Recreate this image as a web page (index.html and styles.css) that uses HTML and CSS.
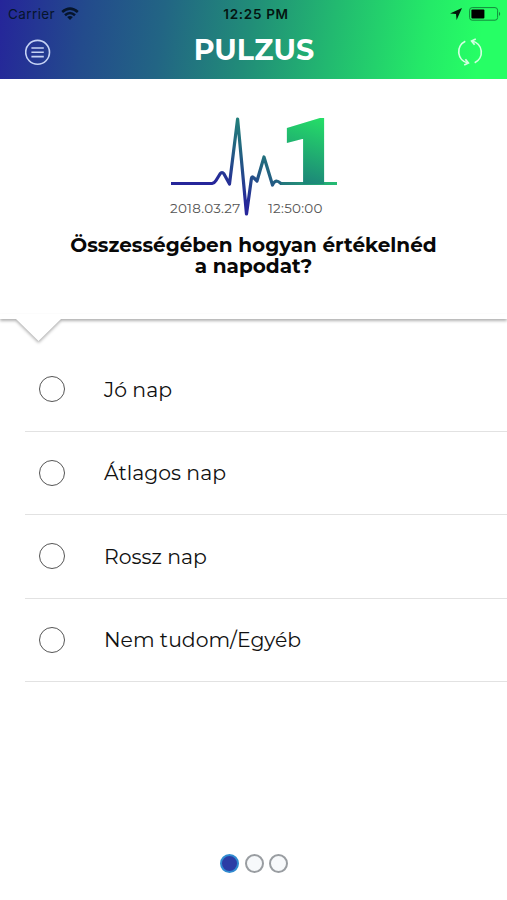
FILE: index.html
```html
<!DOCTYPE html>
<html lang="hu">
<head>
<meta charset="utf-8">
<title>Pulzus</title>
<link rel="stylesheet" href="styles.css">
</head>
<body>
<header class="header">
  <div class="status">
    <div class="carrier"><span class="carrier-name">Carrier</span>
      <svg width="18" height="14" viewBox="0 0 18 14" fill="none" stroke="#06152c" stroke-width="2.6"><path d="M1.200 5Q9-1.800 16.800 5M4 8.200Q9 3.800 14 8.200"/><path d="M6.100 10Q9 7.800 11.900 10L9 13Z" fill="#06152c" stroke="none"/></svg>
    </div>
    <span class="clock">12:25 PM</span>
    <div class="indicators">
      <svg width="12" height="12" viewBox="0 0 12 12"><path d="M12 0L6.6 12L6 6.1L0 5.5Z" fill="#03170a"/></svg>
      <svg width="32" height="14" viewBox="0 0 32 14"><rect x=".6" y=".6" width="28" height="12.6" rx="2.6" fill="none" stroke="#138a3c"/><rect x="2.4" y="2.4" width="13" height="9" rx="1" fill="#000"/><path d="M30 4.8Q32.4 6.9 30 9Z" fill="#138a3c"/></svg>
    </div>
  </div>
  <div class="bar">
    <svg width="26" height="26" viewBox="0 0 26 26" fill="none" stroke="#c5d2f4" stroke-width="1.6"><circle cx="12.600" cy="13.300" r="11.900"/><path d="M6.400 9H18.800M6.400 13.300H18.800M6.400 17.600H18.800"/></svg>
    <h1 class="title">PULZUS</h1>
    <svg width="26" height="28" viewBox="0 0 26 28" fill="none" stroke="#d4ffe2" stroke-width="1.7"><path d="M8.3 3.2A11.6 11.6 0 0 0 10.8 25M17.7 24.8A11.6 11.6 0 0 0 15.2 3"/><path d="M18.8 1L14.6 3L17.6 6.7M7.2 27L11.4 25L8.4 21.3"/></svg>
  </div>
</header>
<main>
  <section class="question">
    <svg class="pulse" width="168" height="102" viewBox="0 0 168 102">
      <defs>
        <linearGradient id="line" gradientUnits="userSpaceOnUse" x1="58" y1="75" x2="108" y2="12"><stop offset="0" stop-color="#26269a"/><stop offset=".5" stop-color="#23667f"/><stop offset="1" stop-color="#209477"/></linearGradient>
        <linearGradient id="base" gradientUnits="userSpaceOnUse" x1="95" y1="0" x2="167" y2="0"><stop offset="0" stop-color="#24607f"/><stop offset="1" stop-color="#24bd72"/></linearGradient>
        <linearGradient id="digit" gradientUnits="userSpaceOnUse" x1="130" y1="68" x2="151" y2="2"><stop offset="0" stop-color="#1c8479"/><stop offset="1" stop-color="#25df67"/></linearGradient>
      </defs>
      <path d="M110 68.5H167" fill="none" stroke="url(#base)" stroke-width="3"/>
      <path d="M1 68.500H42Q44.500 68 46 65.500L50 59Q52 56 54 59L59.500 69L67.600 4L76.500 99L81.500 63Q82 60.500 84 63L87 66L94 42L102.500 70Q103.500 67 106.500 66Q108 66 111 68.500" fill="none" stroke="url(#line)" stroke-width="3.2" stroke-linejoin="round"/>
      <text class="digit" x="111" y="67" textLength="58" lengthAdjust="spacingAndGlyphs" fill="url(#digit)" stroke="url(#digit)" stroke-width="4">1</text>
    </svg>
    <div class="stamp"><span class="date">2018.03.27</span><span class="time">12:50:00</span></div>
    <h2 class="ask">Összességében hogyan értékelnéd<br>a napodat?</h2>
    <svg class="edge" width="507" height="36" viewBox="0 0 507 36"><path d="M-10-10H517V5H61L38.500 27L16 5H-10Z" fill="#fff"/></svg>
  </section>
  <ul class="answers">
    <li class="answer"><span class="radio"></span><span>Jó nap</span></li>
    <li class="answer"><span class="radio"></span><span>Átlagos nap</span></li>
    <li class="answer"><span class="radio"></span><span>Rossz nap</span></li>
    <li class="answer"><span class="radio"></span><span>Nem tudom/Egyéb</span></li>
  </ul>
</main>
<footer class="pager"><i class="dot active"></i><i class="dot"></i><i class="dot"></i></footer>
</body>
</html>
```
FILE: styles.css
```css
* { box-sizing: border-box; }
body {
  margin: 0;
  height: 900px;
  display: flex;
  flex-direction: column;
  overflow: hidden;
  background: #fff;
  color: #111;
  font-family: Montserrat, Inter, sans-serif;
}
svg { display: block; flex: none; }
.header {
  height: 79px;
  flex: none;
  background: linear-gradient(98deg, #25259a 0%, #234b8c 17%, #226584 32%, #218d78 49%, #22b970 65%, #24e968 83%, #26ff65 94%);
}
.status {
  height: 27px;
  display: grid;
  grid-template-columns: 1fr auto 1fr;
  align-items: center;
  padding: 0 6px 0 8px;
  font-family: Inter, sans-serif;
  font-size: 13.5px;
}
.carrier { display: flex; align-items: center; gap: 6px; color: #06152c; }
.carrier-name { letter-spacing: .4px; }
.clock { font-weight: 600; letter-spacing: .7px; color: #041511; padding-left: 3px; }
.indicators { display: flex; justify-content: flex-end; align-items: center; gap: 7px; }
.bar {
  height: 50px;
  display: flex;
  align-items: center;
  justify-content: space-between;
  padding: 0 24px 0 25px;
}
.title { margin: -5px 0 0; color: #fff; font-size: 28.5px; line-height: 34px; font-weight: 700; letter-spacing: .1px; }
.question { height: 236px; padding-top: 36px; }
.pulse { margin-left: 170px; overflow: visible; }
.digit { font-family: Roboto, sans-serif; font-weight: 900; font-size: 88px; }
.stamp {
  display: flex;
  height: 18px;
  margin: -18px 0 0 170px;
  gap: 28px;
  font-size: 13.5px;
  line-height: 18px;
  font-weight: 400;
  letter-spacing: .25px;
  color: #555;
}
.date { width: 70px; white-space: nowrap; }
.ask { margin: 18px 0 0; height: 79px; text-align: center; color: #080808; font-size: 20px; line-height: 21px; font-weight: 700; }
.edge { filter: drop-shadow(0 2px 1.5px rgba(0, 0, 0, .3)); }
.answers { list-style: none; margin: 33px 0 0 25px; padding: 0; }
.answer {
  height: 83.5px;
  display: flex;
  align-items: center;
  gap: 39px;
  padding-left: 14px;
  border-bottom: 1px solid #e2e2e2;
  font-size: 20.4px;
}
.radio { width: 26px; height: 26px; border: 1.5px solid #555; border-radius: 50%; }
.pager { margin-top: auto; height: 46px; display: flex; justify-content: center; gap: 5.5px; padding-left: 1px; }
.dot { width: 19px; height: 19px; border: 2px solid #999da1; border-radius: 50%; background: #f7f9fb; }
.dot.active { border-color: #318bd0; background: #2c3da5; }
```
